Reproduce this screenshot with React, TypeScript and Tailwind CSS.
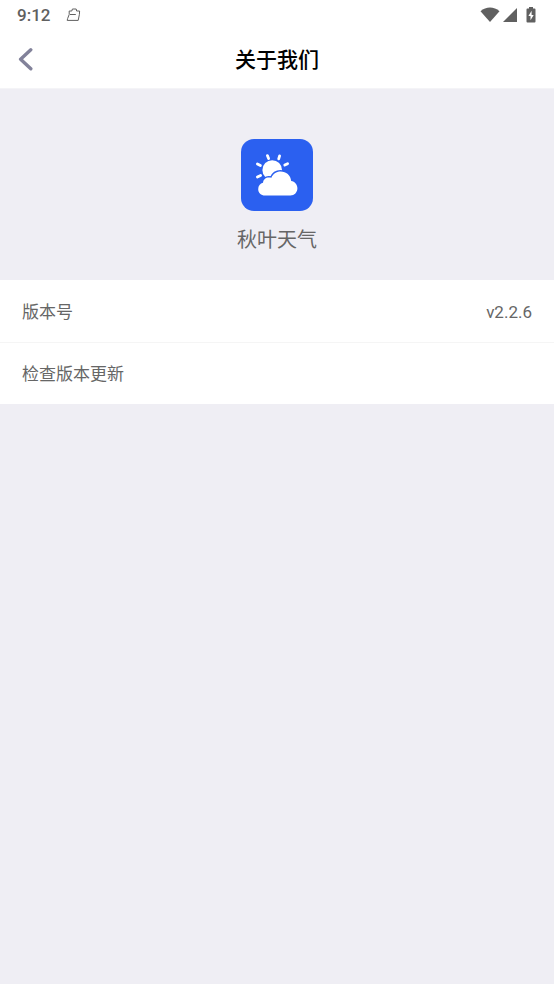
import React from 'react'

const StatusBar: React.FC = () => (
  <div className="flex h-[30px] items-center justify-between bg-white pr-[18px] pl-[17px] text-[#606060]">
    <div className="flex items-center gap-4">
      <span className="font-[Roboto,sans-serif] text-[17px] leading-5 font-medium">9:12</span>
      <svg className="h-4 w-4" viewBox="0 0 16 16" fill="none" stroke="currentColor" strokeWidth="1">
        <path d="M3.2 4H5.8L6.4 2H10.2L10.6 4H13.6L13.4 7.4L12.2 13.4H1.2L1.6 11.6L3.2 7.5Z" strokeLinejoin="round" />
        <path d="M4 7.5H9.8" />
      </svg>
    </div>
    <div className="flex items-center">
      <svg className="mr-[3px] h-4 w-5" viewBox="0 0 20 16" fill="currentColor">
        <path d="M0.5 4.2C6 -0.6 14 -0.6 19.5 4.2L10 15Z" />
      </svg>
      <svg className="mr-[9px] h-4 w-[14px]" viewBox="0 0 14 16" fill="currentColor">
        <path d="M14 1V15H0Z" />
      </svg>
      <svg className="h-4 w-[10px]" viewBox="0 0 10 16">
        <path d="M3 0H7V1.6H8.6Q9.5 1.6 9.5 2.5V14.6Q9.5 15.5 8.6 15.5H1.4Q0.5 15.5 0.5 14.6V2.5Q0.5 1.6 1.4 1.6H3Z" fill="currentColor" />
        <path d="M5.6 3.8L2.4 9H4.5V13.2L7.7 8H5.6Z" fill="white" />
      </svg>
    </div>
  </div>
)

const AppLogo: React.FC = () => (
  <svg className="h-[72px] w-[72px]" viewBox="0 0 72 72" role="img" aria-label="秋叶天气">
    <rect width="72" height="72" rx="13" fill="#2b60f0" />
    <g stroke="white" strokeWidth="2.8" strokeLinecap="round">
      <path d="M16.4 25L19.4 26.6" />
      <path d="M26.4 16.6L27.6 19.6" />
      <path d="M38.6 16.9L37.7 19.8" />
      <path d="M46.6 24.7L43.8 26.1" />
      <path d="M16.4 38L19.6 36.5" />
    </g>
    <circle cx="31.2" cy="31" r="9.8" fill="white" />
    <path
      d="M24 56.5C20 56.5 17.2 53.6 17.2 50.2C17.2 46.8 19.2 44.4 22 43.8C22.2 40.4 24.8 38.4 27.6 38.4C28.8 38.4 29.6 38.6 30.4 38.8C32 35 35.2 32.6 39.6 32.6C45.2 32.6 49.6 36.4 50.2 42C53.8 42.6 56.4 45.6 56.4 49.3C56.4 53.4 53.4 56.5 49.4 56.5Z"
      fill="white"
      stroke="#2b60f0"
      strokeWidth="3"
      paintOrder="stroke"
    />
  </svg>
)

const App: React.FC = () => {
  return (
    <div className="flex min-h-screen flex-col bg-[#efeef4] font-[Roboto,'Noto_Sans_CJK_SC',sans-serif]">
      <StatusBar />

      <header className="grid h-[59px] grid-cols-[1fr_auto_1fr] items-center border-b border-[#f4f4f7] bg-white">
        <button type="button" aria-label="返回" className="flex h-full w-12 items-center pl-[18px] text-[#82829a]">
          <svg className="h-6 w-4" viewBox="0 0 16 24" fill="none" stroke="currentColor" strokeWidth="3.4">
            <path d="M12.8 2.8L2.6 12.2L12.8 21.8" strokeLinecap="round" strokeLinejoin="round" />
          </svg>
        </button>
        <h1 className="pt-px text-[21px] leading-8 font-medium text-black">关于我们</h1>
      </header>

      <section className="flex flex-col items-center pt-[50px] pb-6">
        <AppLogo />
        <p className="mt-[14px] text-[20px] leading-[31px] text-[#666666]">秋叶天气</p>
      </section>

      <ul className="bg-white text-[17px] leading-6 text-[#666666]">
        <li className="flex h-[63px] items-center justify-between border-b border-[#f5f5f5] px-[22px] pt-px">
          <span>版本号</span>
          <span>v2.2.6</span>
        </li>
        <li>
          <button type="button" className="flex h-[61px] w-full items-center px-[22px] text-left">
            检查版本更新
          </button>
        </li>
      </ul>
    </div>
  )
}

export default App
